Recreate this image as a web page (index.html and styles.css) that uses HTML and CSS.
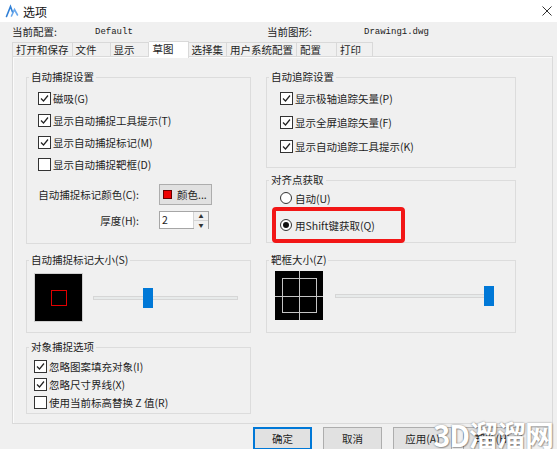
FILE: index.html
```html
<!DOCTYPE html>
<html lang="zh-CN">
<head>
<meta charset="utf-8">
<title>选项</title>
<link rel="stylesheet" href="styles.css">
</head>
<body>
<div class="titlebar">
  <svg class="app-icon" viewBox="0 0 14 14"><path d="M1.5 12.5 L5.5 2.5 L7.5 8" fill="none" stroke="#2f7fd6" stroke-width="1.6" stroke-linecap="round"/><path d="M6.5 12 L9.5 5.5 L12.5 11" fill="none" stroke="#6aa9ec" stroke-width="1.6" stroke-linecap="round"/></svg>
  <span class="title">选项</span>
  <svg class="close" viewBox="0 0 10 10"><path d="M0.5 0.5 L9.5 9.5 M9.5 0.5 L0.5 9.5" stroke="#333" stroke-width="1"/></svg>
</div>

<div class="info">
  <div class="info-item first"><span class="info-label">当前配置:</span><span class="mono">Default</span></div>
  <div class="info-item second"><span class="info-label">当前图形:</span><span class="mono">Drawing1.dwg</span></div>
</div>

<div class="tabs">
  <div class="tab first">打开和保存</div>
  <div class="tab w38">文件</div>
  <div class="tab w38">显示</div>
  <div class="tab w40 active">草图</div>
  <div class="tab">选择集</div>
  <div class="tab">用户系统配置</div>
  <div class="tab w40">配置</div>
  <div class="tab w36">打印</div>
</div>

<div class="panel">
  <div class="col">
    <fieldset class="group h-snap">
      <legend>自动捕捉设置</legend>
      <div class="rows rows-snap">
        <div class="check"><span class="box on"><svg viewBox="0 0 11 11"><path d="M2 5.5 L4.5 8 L9 2.5"/></svg></span>磁吸(G)</div>
        <div class="check"><span class="box on"><svg viewBox="0 0 11 11"><path d="M2 5.5 L4.5 8 L9 2.5"/></svg></span>显示自动捕捉工具提示(T)</div>
        <div class="check"><span class="box on"><svg viewBox="0 0 11 11"><path d="M2 5.5 L4.5 8 L9 2.5"/></svg></span>显示自动捕捉标记(M)</div>
        <div class="check"><span class="box"></span>显示自动捕捉靶框(D)</div>
      </div>
      <div class="field-row color-row">
        <span class="field-label">自动捕捉标记颜色(C):</span>
        <span class="color-btn"><span class="swatch"></span>颜色...</span>
      </div>
      <div class="field-row thick-row">
        <span class="field-label">厚度(H):</span>
        <span class="spin"><span class="spin-val">2</span><span class="spin-btns"><span class="spin-up">▲</span><span class="spin-down">▼</span></span></span>
      </div>
    </fieldset>

    <fieldset class="group h-size gap9">
      <legend>自动捕捉标记大小(S)</legend>
      <div class="size-row pad7">
        <div class="preview marker"><span class="marker-box"></span></div>
        <div class="slider s-left"><div class="track"></div><div class="thumb" style="left:50px"></div></div>
      </div>
    </fieldset>

    <fieldset class="group h-opts gap7">
      <legend>对象捕捉选项</legend>
      <div class="rows rows-opts">
        <div class="check"><span class="box on"><svg viewBox="0 0 11 11"><path d="M2 5.5 L4.5 8 L9 2.5"/></svg></span>忽略图案填充对象(I)</div>
        <div class="check"><span class="box on"><svg viewBox="0 0 11 11"><path d="M2 5.5 L4.5 8 L9 2.5"/></svg></span>忽略尺寸界线(X)</div>
        <div class="check"><span class="box"></span>使用当前标高替换 Z 值(R)</div>
      </div>
    </fieldset>
  </div>

  <div class="col">
    <fieldset class="group h-track">
      <legend>自动追踪设置</legend>
      <div class="rows rows-track">
        <div class="check"><span class="box on"><svg viewBox="0 0 11 11"><path d="M2 5.5 L4.5 8 L9 2.5"/></svg></span>显示极轴追踪矢量(P)</div>
        <div class="check"><span class="box on"><svg viewBox="0 0 11 11"><path d="M2 5.5 L4.5 8 L9 2.5"/></svg></span>显示全屏追踪矢量(F)</div>
        <div class="check"><span class="box on"><svg viewBox="0 0 11 11"><path d="M2 5.5 L4.5 8 L9 2.5"/></svg></span>显示自动追踪工具提示(K)</div>
      </div>
    </fieldset>

    <fieldset class="group h-align gap5">
      <legend>对齐点获取</legend>
      <div class="rows rows-align">
        <div class="radio-row"><span class="radio"></span>自动(U)</div>
        <div class="highlight">
          <div class="radio-row"><span class="radio on"></span>用Shift键获取(Q)</div>
        </div>
      </div>
    </fieldset>

    <fieldset class="group h-size gap10">
      <legend>靶框大小(Z)</legend>
      <div class="size-row pad8 top4">
        <svg class="preview aperture" viewBox="0 0 48 49"><rect width="48" height="49" fill="#000"/><rect x="7.5" y="7.5" width="34" height="34" fill="none" stroke="#c4c4c4"/><path d="M24.5 0 V49 M0 25.5 H48" stroke="#c4c4c4"/></svg>
        <div class="slider s-right"><div class="track"></div><div class="thumb" style="left:149px"></div></div>
      </div>
    </fieldset>
  </div>
</div>

<div class="buttons">
  <button class="btn default">确定</button>
  <button class="btn">取消</button>
  <button class="btn">应用(A)</button>
  <button class="btn">帮助(H)</button>
</div>

<div class="watermark">3D溜溜网</div>
</body>
</html>
```

FILE: styles.css
```css
* { box-sizing: border-box; }
html, body { margin: 0; padding: 0; }
body {
  width: 557px;
  height: 449px;
  overflow: hidden;
  position: relative;
  background: #f0f0f0;
  font-family: "Noto Sans CJK SC", "Noto Sans", sans-serif;
  font-size: 10.5px;
  color: #1e1e1e;
}

/* title bar */
.titlebar {
  height: 22px;
  background: #fff;
  display: flex;
  align-items: center;
  padding-left: 5px;
}
.app-icon { width: 14px; height: 14px; }
.title { margin-left: 4px; font-size: 12px; color: #111; }
.close { width: 10px; height: 10px; margin-left: auto; margin-right: 5px; }

/* info */
.info {
  height: 19px;
  display: flex;
  align-items: center;
  padding-left: 12px;
}
.info-item { display: flex; align-items: center; }
.info-item.first { width: 255px; }
.info-item.first .info-label { width: 83px; }
.info-item.second .info-label { width: 97px; }
.mono { font-family: "Liberation Mono", monospace; font-size: 9px; color: #222; }

/* tabs */
.tabs {
  height: 15px;
  display: flex;
  align-items: flex-end;
  padding-left: 12px;
  position: relative;
  z-index: 1;
}
.tab {
  height: 14px;
  padding: 0 3px;
  line-height: 14px;
  border: 1px solid #d9d9d9;
  border-left: none;
  border-bottom: none;
  background: #f0f0f0;
  white-space: nowrap;
}
.tab.first { border-left: 1px solid #d9d9d9; }
.tab.w36 { width: 36px; }
.tab.w38 { width: 38px; }
.tab.w40 { width: 40px; }
.tab.active {
  height: 17px;
  line-height: 13px;
  background: #fff;
  margin-bottom: -2px;
  padding-left: 4px;
  border-top: 1px solid #d9d9d9;
}

/* panel */
.panel {
  margin-left: 12px;
  width: 541px;
  height: 368px;
  border: 1px solid #dadada;
  box-shadow: inset 1px 1px 0 #fbfbfb;
  padding: 13px 0 0 13px;
  display: grid;
  grid-template-columns: 225px 250px;
  column-gap: 15px;
  align-items: start;
}
.col { display: flex; flex-direction: column; }

/* group boxes */
fieldset.group {
  margin: 0;
  padding: 0;
  min-width: 0;
  border: 1px solid #dcdcdc;
}
fieldset.group legend {
  margin-left: 2px;
  padding: 0 2px;
  line-height: 14px;
  color: #222;
}
.h-snap { height: 174px; }
.h-size { height: 80px; }
.h-opts { height: 74px; }
.h-track { height: 98px; }
.h-align { height: 70px; }
.gap5 { margin-top: 5px !important; }
.gap7 { margin-top: 7px !important; }
.gap9 { margin-top: 9px !important; }
.gap10 { margin-top: 10px !important; }

.rows { display: flex; flex-direction: column; }
.rows-snap { margin-top: 6px; padding-left: 11px; gap: 6px; }
.rows-track { margin-top: 6px; padding-left: 13px; gap: 8px; }
.rows-opts { margin-top: 4px; padding-left: 7px; gap: 2px; }
.rows-align { margin-top: 3px; padding-left: 5px; gap: 1px; }

/* checkbox */
.check {
  height: 16px;
  display: flex;
  align-items: center;
  gap: 2px;
  white-space: nowrap;
}
.box {
  width: 13px;
  height: 13px;
  flex: none;
  border: 1px solid #333;
  background: #fff;
  display: flex;
}
.box svg { width: 11px; height: 11px; }
.box svg path { fill: none; stroke: #222; stroke-width: 1.2; }

/* radio */
.radio-row {
  height: 16px;
  display: flex;
  align-items: center;
  gap: 3px;
  padding-left: 8px;
  white-space: nowrap;
}
.radio {
  width: 12px;
  height: 12px;
  flex: none;
  border: 1px solid #333;
  border-radius: 50%;
  background: #fff;
  display: flex;
  align-items: center;
  justify-content: center;
}
.radio.on::after {
  content: "";
  width: 6px;
  height: 6px;
  border-radius: 50%;
  background: #111;
}
.highlight {
  width: 133px;
  height: 36px;
  border: 4px solid #f21616;
  border-radius: 4px;
  display: flex;
  align-items: center;
  padding-left: 0;
  margin-bottom: -4px;
}
.highlight .radio-row { padding-left: 4px; }

/* color / thickness */
.field-row { display: flex; align-items: center; padding-left: 10px; }
.field-label { width: 102px; margin-right: 20px; text-align: right; white-space: nowrap; }
.color-row { margin-top: 12px; height: 21px; }
.color-btn {
  width: 53px;
  height: 21px;
  background: #e1e1e1;
  border: 1px solid #adadad;
  display: flex;
  align-items: center;
  padding-left: 3px;
  gap: 5px;
  white-space: nowrap;
}
.swatch {
  width: 9px;
  height: 9px;
  background: #ee0000;
  border: 1px solid #600;
  flex: none;
}
.thick-row { margin-top: 6px; height: 18px; }
.spin {
  width: 50px;
  height: 18px;
  background: #fff;
  border: 1px solid #a6a6a6;
  display: flex;
}
.spin-val { flex: 1; padding-left: 2px; line-height: 16px; }
.spin-btns {
  width: 15px;
  display: flex;
  flex-direction: column;
  border-left: 1px solid #d4d4d4;
}
.spin-btns span {
  flex: 1;
  font-size: 5px;
  line-height: 8px;
  text-align: center;
  color: #333;
  background: #f0f0f0;
}
.spin-up { border-bottom: 1px solid #d4d4d4; }

/* size previews */
.size-row { display: flex; align-items: center; margin-top: 6px; }
.size-row.top4 { margin-top: 4px; }
.pad7 { padding-left: 7px; }
.pad8 { padding-left: 8px; }
.preview { flex: none; }
.marker {
  width: 49px;
  height: 49px;
  background: #000;
  border: 1px solid #cfcfcf;
  display: flex;
  align-items: center;
  justify-content: center;
}
.marker-box { width: 16px; height: 16px; border: 1px solid #e00000; }
.aperture { width: 48px; height: 49px; display: block; }

.slider { position: relative; height: 20px; flex: none; }
.s-left { width: 145px; margin-left: 10px; }
.s-right { width: 159px; margin-left: 12px; }
.track {
  margin-top: 8px;
  height: 4px;
  background: #e7eaea;
  border: 1px solid #d6d6d6;
}
.thumb {
  position: absolute;
  top: 0;
  width: 10px;
  height: 20px;
  background: #0078d7;
}

/* bottom buttons */
.buttons {
  display: flex;
  justify-content: flex-end;
  gap: 11px;
  padding-right: 35px;
  margin-top: 3px;
}
.btn {
  width: 59px;
  height: 23px;
  background: #e1e1e1;
  border: 1px solid #adadad;
  font-family: inherit;
  font-size: 10.5px;
  color: #1e1e1e;
  padding: 0;
}
.btn.default { border: 1px solid #0078d7; box-shadow: inset 0 0 0 1px #0078d7; }

/* watermark overlay */
.watermark {
  position: absolute;
  right: 4px;
  bottom: -6px;
  font-family: "Noto Sans CJK SC", sans-serif;
  font-weight: 700;
  font-size: 29px;
  letter-spacing: -1px;
  color: #fff;
  text-shadow: 0 0 2px rgba(0,0,0,0.45), 1px 1px 1px rgba(0,0,0,0.25);
}
```
